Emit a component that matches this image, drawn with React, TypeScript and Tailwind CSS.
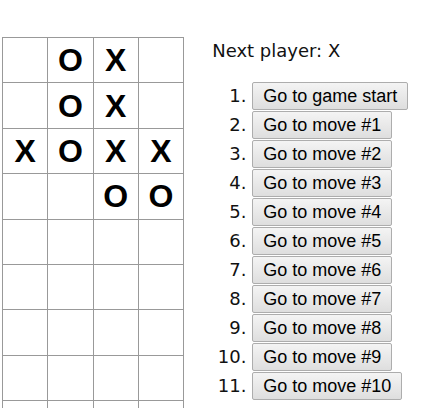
import React from 'react';

type Cell = 'X' | 'O' | null;

const rows: Cell[][] = [
  [null, 'O', 'X', null],
  [null, 'O', 'X', null],
  ['X', 'O', 'X', 'X'],
  [null, null, 'O', 'O'],
  [null, null, null, null],
  [null, null, null, null],
  [null, null, null, null],
  [null, null, null, null],
  [null, null, null, null],
];

const moves = [
  'Go to game start',
  'Go to move #1',
  'Go to move #2',
  'Go to move #3',
  'Go to move #4',
  'Go to move #5',
  'Go to move #6',
  'Go to move #7',
  'Go to move #8',
  'Go to move #9',
  'Go to move #10',
];

const Square = ({ value }: { value: Cell }) => {
  return (
    <button className="w-[45.3px] h-[45.4px] border-r border-b border-[#999] bg-white flex items-center justify-center text-[32px] font-bold leading-none text-black font-['Liberation_Sans',Arial,sans-serif]">
      {value}
    </button>
  );
};

const Board = () => {
  return (
    <div className="border-t border-l border-[#999] grid grid-cols-[repeat(4,45.3px)] w-fit">
      {rows.map((row, r) =>
        row.map((value, c) => <Square key={`${r}-${c}`} value={value} />),
      )}
    </div>
  );
};

const App = () => {
  return (
    <div className="w-[421px] h-[408px] overflow-hidden bg-white">
      <div className="flex pl-[2px] pt-[37px]">
        <Board />
        <div className="ml-[28px] text-[18px] text-[#111] font-['DejaVu_Sans',sans-serif]">
          <div className="mt-[4px] leading-[20px]">Next player: X</div>
          <ol className="list-decimal pl-[40px] mt-[21px]">
            {moves.map((label) => (
              <li key={label} className="h-[29px]">
                <button className="h-[28px] px-[10px] border border-[#adadad] rounded-[2px] bg-gradient-to-b from-[#f4f4f4] to-[#dedede] text-[18px] text-black leading-none font-['Liberation_Sans',Arial,sans-serif]">
                  {label}
                </button>
              </li>
            ))}
          </ol>
        </div>
      </div>
    </div>
  );
};

export default App;
